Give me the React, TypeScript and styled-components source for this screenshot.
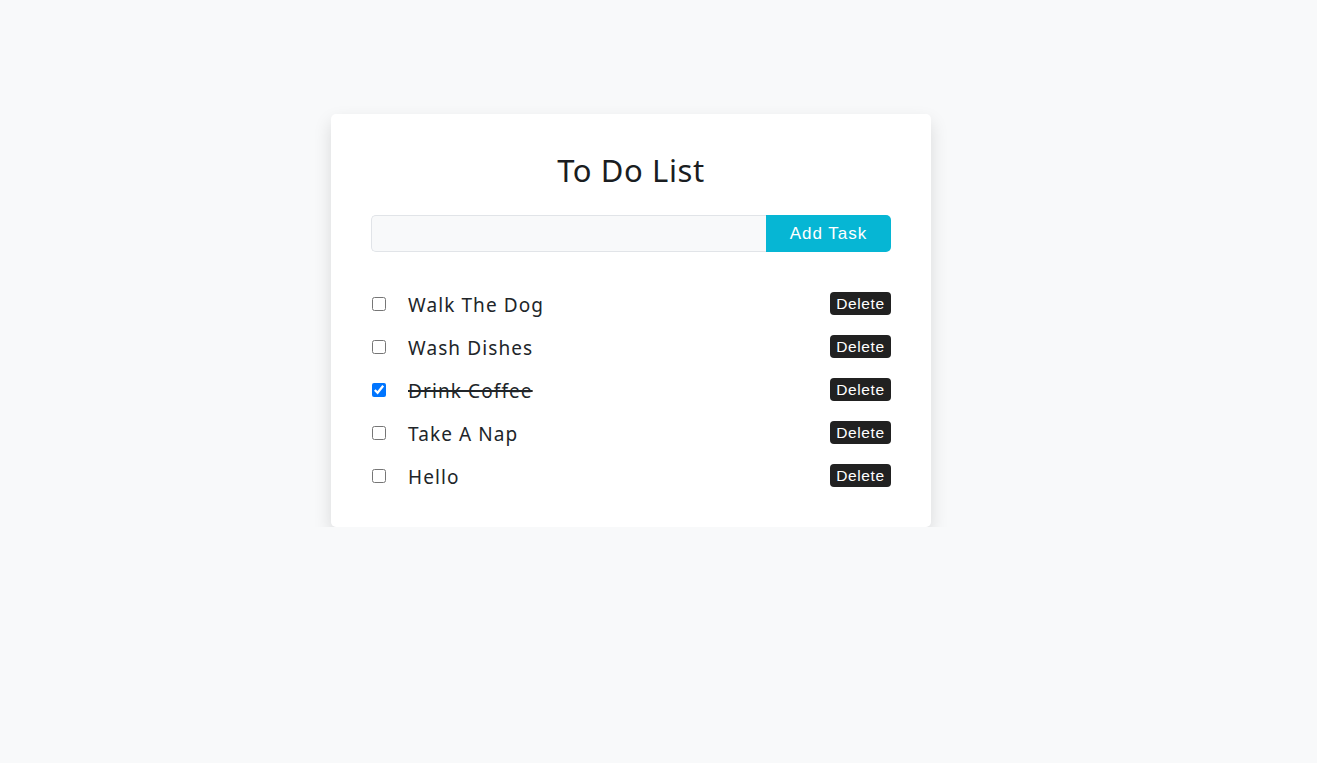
import React, { useState } from "react";
import styled, { createGlobalStyle } from "styled-components";

const Global = createGlobalStyle`
  html, body { margin: 0; padding: 0; background: #f8f9fa; }
  body { font-family: "Noto Sans", "Open Sans", sans-serif; color: #212529; }
`;

const Page = styled.div`
  display: flex;
  justify-content: center;
  padding-top: 114px;
  padding-right: 55px;
`;

const Card = styled.div`
  width: 600px;
  box-sizing: border-box;
  background: #fff;
  border-radius: 5px;
  padding: 35px 40px 30px;
  box-shadow: 0 8px 18px rgba(0, 0, 0, 0.13);
`;

const Title = styled.h1`
  margin: 0 0 24px;
  text-align: center;
  font-weight: 400;
  font-size: 31px;
  line-height: 42px;
  letter-spacing: 0.6px;
  color: #1a1d21;
`;

const Form = styled.div`
  display: flex;
  height: 37px;
  margin-bottom: 30px;
`;

const Input = styled.input`
  flex: 1;
  min-width: 0;
  box-sizing: border-box;
  border: 1px solid #e1e4e8;
  border-right: none;
  border-radius: 5px 0 0 5px;
  background: #f8f9fa;
  outline: none;
`;

const AddButton = styled.button`
  width: 125px;
  border: none;
  border-radius: 0 5px 5px 0;
  background: #06b6d4;
  color: #fff;
  font-family: "Liberation Sans", Arial, sans-serif;
  font-size: 17px;
  letter-spacing: 1px;
  cursor: pointer;
`;

const List = styled.ul`
  list-style: none;
  margin: 0;
  padding: 0;
`;

const Row = styled.li`
  display: flex;
  align-items: center;
  height: 43px;
`;

const Check = styled.input`
  width: 14px;
  height: 14px;
  margin: 0 0 0 1px;
`;

const Label = styled.span<{ $done?: boolean }>`
  flex: 1;
  margin-left: 22px;
  font-size: 19px;
  letter-spacing: 1.1px;
  color: #212529;
  text-decoration: ${(p) => (p.$done ? "line-through" : "none")};
  text-decoration-thickness: 2px;
  position: relative;
  top: 1px;
`;

const DeleteButton = styled.button`
  height: 23px;
  width: 61px;
  padding: 0;
  border: none;
  border-radius: 4px;
  background: #212121;
  color: #fff;
  font-family: "Liberation Sans", Arial, sans-serif;
  font-size: 15.5px;
  letter-spacing: 0.6px;
  cursor: pointer;
`;

const initial = [
  { text: "Walk The Dog", done: false },
  { text: "Wash Dishes", done: false },
  { text: "Drink Coffee", done: true },
  { text: "Take A Nap", done: false },
  { text: "Hello", done: false },
];

export default function App() {
  const [tasks, setTasks] = useState(initial);
  return (
    <>
      <Global />
      <Page>
        <Card>
          <Title>To Do List</Title>
          <Form>
            <Input />
            <AddButton>Add Task</AddButton>
          </Form>
          <List>
            {tasks.map((t, i) => (
              <Row key={i}>
                <Check
                  type="checkbox"
                  checked={t.done}
                  onChange={() =>
                    setTasks(tasks.map((x, j) => (j === i ? { ...x, done: !x.done } : x)))
                  }
                />
                <Label $done={t.done}>{t.text}</Label>
                <DeleteButton>Delete</DeleteButton>
              </Row>
            ))}
          </List>
        </Card>
      </Page>
    </>
  );
}
